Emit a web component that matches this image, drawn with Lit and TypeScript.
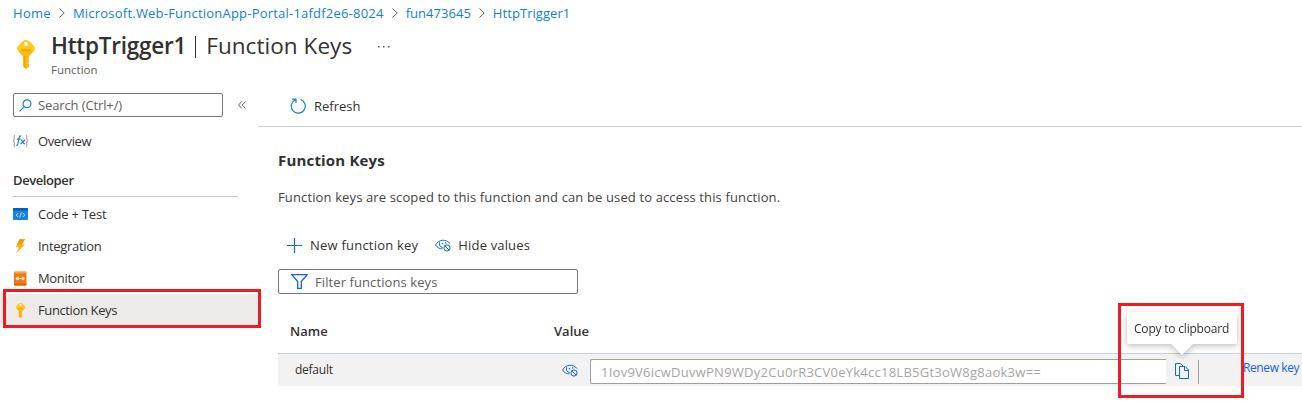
import { LitElement, html, css, svg } from "lit";
import { customElement } from "lit/decorators.js";

const key = svg`<path d="M9 0C7.400 0 6.200.8 4.900 2.100L.9 6.300c-1.200 1.300-1.200 3 0 4.300L6 16v10.500L9 29l3-2.500V24l-1-1 1-1v-2l-1-1 1-1v-2l5.100-5.400c1.200-1.300 1.200-3 0-4.300l-4-4.200C11.800.8 10.600 0 9 0Z" fill="#ffca1a"/><path d="M1 10.700h16L12 16v2l-1 1 1 1v2l-1 1 1 1v2.500L9 29l-3-2.500V16Z" fill="#fdb813"/><path d="M7 16h1.300v11.500L7 26.500Z" fill="#f5a00a"/><circle cx="9" cy="4" r="1.900" fill="#fff"/><rect x="4.300" y="9.200" width="9.400" height="2" rx=".8" fill="#f0a500"/>`;
const eye = html`<svg class="eye" width="16" height="13" viewBox="0 0 16 13" fill="none" stroke="currentColor"><path d="M.6 6C3.500 0 11.500-.2 15 4.600M.6 6C2.200 8.600 4.500 9.800 7.500 9.900"/><path d="M4.700 3.200C3.800 6 5 8.200 7.700 8.500M10.300 3.200c.5.700.6 1 .6 1.700"/><circle cx="7.500" cy="4.800" r=".8" fill="currentColor" stroke="none"/><circle cx="12" cy="9" r="3.100"/><path d="m9.900 6.900 4.200 4.200"/></svg>`;
const chevron = html`<svg class="chev" width="6" height="10" viewBox="0 0 6 10" fill="none" stroke="#605e5c"><path d="m.5.500 4.700 4.500L.5 9.500"/></svg>`;

@customElement("app-root")
export class AppRoot extends LitElement {
  static styles = css`
    :host { display: block; position: relative; width: 1302px; height: 413px; overflow: hidden; background: #fff; color: #323130; font: 13px/20px "Open Sans", sans-serif; white-space: nowrap; }
    * { box-sizing: border-box; }
    svg { display: block; flex: none; }
    .crumbs { display: flex; align-items: center; height: 25px; padding-left: 13px; color: #0f7fd8; }
    .c1 { letter-spacing: .3px; }
    .c2 { letter-spacing: .215px; }
    .c3 { letter-spacing: .03px; }
    .c4 { letter-spacing: .06px; }
    .chev { margin: 1px 8px 0 8px; }
    header { display: flex; height: 57px; padding-left: 17px; }
    .bigkey { margin: 15px 16px 0 0; }
    .title { display: flex; height: 40px; font-size: 22.500px; line-height: 42px; }
    .t1 { font-weight: 600; letter-spacing: -.22px; }
    .t2 { letter-spacing: .05px; }
    .bar { width: 1px; height: 22px; background: #323130; margin: 11px 10px 0 9px; }
    .more { margin: 20px 0 0 26px; }
    .sub { font-size: 11.500px; line-height: 9px; color: #605e5c; }
    .body { display: flex; }
    nav { width: 258px; padding-top: 11px; }
    .searchrow { display: flex; align-items: center; }
    .search { display: flex; align-items: center; width: 210px; height: 24px; margin-left: 13px; border: 1px solid #7a7876; border-radius: 2px; padding-left: 5px; color: #605e5c; }
    .search svg { margin-right: 6px; }
    .s1 { letter-spacing: -.12px; }
    .collapse { margin-left: 15px; }
    .item { display: flex; align-items: center; height: 32px; padding-left: 13px; }
    .item svg { margin-right: 10px; }
    .n1 { letter-spacing: -.4px; }
    .n3 { letter-spacing: -.22px; }
    .n4 { letter-spacing: -.32px; }
    .n5 { letter-spacing: -.33px; }
    .n6 { letter-spacing: -.38px; }
    .overview { margin-top: 8px; }
    .group { height: 40px; margin: 0 20px 0 13px; border-bottom: 1px solid #c8c6c4; font-weight: 600; line-height: 46px; letter-spacing: -.4px; }
    .list { padding-top: 1px; }
    .on { background: #edebe9; }
    main { flex: 1; min-width: 0; }
    .toolbar { display: flex; align-items: center; height: 45px; padding: 4px 0 0 32px; border-bottom: 1px solid #d2d0ce; }
    .toolbar svg { margin-right: 8px; }
    .content { padding-left: 20px; }
    h2 { margin: 24px 0 0; font-size: 15px; line-height: 18px; font-weight: 700; letter-spacing: .18px; }
    .p { margin-top: 18px; color: #44423f; letter-spacing: .13px; }
    .cmds { display: flex; align-items: center; height: 20px; margin: 28px 0 14px; padding-left: 9px; }
    .cmds > svg { color: #0f6cbd; }
    .plus { margin-right: 8px; }
    .cmds .eye { margin: 0 7px 0 17px; }
    .k1 { letter-spacing: .22px; }
    .k2 { letter-spacing: .16px; }
    .filter { display: flex; align-items: center; width: 300px; height: 25px; border: 1px solid #7a7876; border-radius: 2px; padding-left: 12px; color: #605e5c; letter-spacing: .09px; }
    .filter svg { margin-right: 7px; }
    .thead { display: grid; grid-template-columns: 264px 1fr; height: 60px; padding: 17px 0 0 12px; border-bottom: 1px solid #c5d0dc; font-weight: 600; line-height: 41px; }
    .row { display: flex; align-items: center; height: 32px; background: #f2f2f2; }
    .row > * { flex: none; }
    .name { width: 267px; padding-left: 17px; letter-spacing: -.25px; }
    .row .eye { color: #1562e0; margin: 1px 12px 0 17px; }
    .val { width: 576px; height: 25px; margin-top: 2px; padding-left: 10px; background: #fff; border: 1px solid #a19f9d; border-right: 0; border-radius: 2px 0 0 2px; color: #a6a4a2; line-height: 24px; letter-spacing: .25px; }
    .copy { margin: 1px 8px 0 9px; }
    .sep { width: 1px; height: 24px; margin: 3px 44px 0 0; background: #a19f9d; }
    .renew { color: #1562e0; margin-top: -4px; letter-spacing: -.4px; }
    .mark { position: absolute; border: 3px solid #ed1c24; }
    .m1 { left: 3px; top: 289px; width: 258px; height: 39px; }
    .m2 { left: 1118px; top: 303px; width: 126px; height: 95px; }
    .tip { position: absolute; left: 1127px; top: 312px; width: 110px; height: 32px; padding-left: 7px; background: #fff; border-radius: 2px; filter: drop-shadow(0 2px 3px rgba(0,0,0,.25)); line-height: 33px; font-size: 12px; letter-spacing: -.2px; }
    .tip::after { content: ""; position: absolute; left: 44px; top: 32px; border: 11px solid transparent; border-top-color: #fff; border-bottom: 0; }
    .name, .renew { font-size: 12px; }
  `;
  render() {
    const t = (s: string, c = "") => html`<span class=${c}>${s}</span>`;
    return html`
      <div class="crumbs">${t("Home", "c1")}${chevron}${t("Microsoft.Web-FunctionApp-Portal-1afdf2e6-8024", "c2")}${chevron}${t("fun473645", "c3")}${chevron}${t("HttpTrigger1", "c4")}</div>
      <header>
        <svg class="bigkey" width="18" height="29" viewBox="0 0 18 29">${key}</svg>
        <div><div class="title">${t("HttpTrigger1", "t1")}<i class="bar"></i>${t("Function Keys", "t2")}
          <svg class="more" width="12" height="3" viewBox="0 0 12 3" fill="#605e5c"><path d="M0 1h1.500v1.500H0zM5 1h1.500v1.500H5zM10 1h1.500v1.500H10z"/></svg></div>
          <div class="sub">Function</div></div>
      </header>
      <div class="body">
        <nav>
          <div class="searchrow"><div class="search"><svg width="13" height="13" viewBox="0 0 13 13" fill="none" stroke="#0f7fd8" stroke-width="1.200"><circle cx="8" cy="4.800" r="3.900"/><path d="M5.200 7.700.6 12.300"/></svg>${t("Search (Ctrl+/)", "s1")}</div>
            <svg class="collapse" width="8" height="8" viewBox="0 0 8 8" fill="none" stroke="#605e5c"><path d="M3.800.5.500 4l3.300 3.500M7.500.5 4.200 4l3.300 3.500"/></svg></div>
          <div class="item overview"><svg width="15" height="14" viewBox="0 0 15 14"><g fill="none" stroke="#a5a5a5" stroke-width="1.200"><path d="M2 1Q1.200 1 1.200 3v2.500L.4 6.800l.8 1.200v3q0 2 .8 2M13 1q.8 0 .8 2v2.500l.8 1.300-.8 1.200v3q0 2-.8 2"/></g><g fill="none" stroke="#1a7fd6" stroke-width="1.200"><path d="M8.300 2.100C6.600 1.300 6.200 3 5.900 4.500L4.800 10c-.2 1.100-.8 1.500-1.700 1M4 5.200h3.600M7.800 6c2-.8 1.600 4.600 4.400 3.700M12.200 5.800 7.600 10"/></g></svg>${t("Overview", "n1")}</div>
          <div class="group">Developer</div>
          <div class="list">
            <div class="item"><svg width="15" height="12" viewBox="0 0 15 12"><rect width="15" height="12" rx=".8" fill="#1683dc"/><path d="M0 0h15v2.500H0z" fill="#0a5fb4"/><path d="M5.200 5 3.200 7l2 2M9.800 5l2 2-2 2M8.300 4.500l-1.600 5" fill="none" stroke="#cfe8ff" stroke-width=".9"/></svg>${t("Code + Test", "n3")}</div>
            <div class="item"><svg width="15" height="15" viewBox="0 0 15 15"><path d="M6.500.3H12L8.800 5.500H12L3 14.500 6 8.300H2.800Z" fill="#fcb514"/><path d="M6.500.3H12L8.800 5.500 4.200 6z" fill="#f79a0e"/></svg>${t("Integration", "n4")}</div>
            <div class="item"><svg width="15" height="15" viewBox="0 0 15 15"><rect x="1" y=".5" width="12.500" height="14" rx="1" fill="#f07a13"/><path d="M1 12.500h12.500v1a1 1 0 0 1-1 1H2a1 1 0 0 1-1-1z" fill="#dc6407"/><path d="M2 1.800h11" stroke="#ffc38a" stroke-width=".8"/><path d="M6 7.500h2.500" stroke="#fff"/><circle cx="4.500" cy="7.500" r="1.300" fill="#f9c294" stroke="#fff" stroke-width=".8"/><circle cx="10" cy="7.500" r="1.300" fill="#f9c294" stroke="#fff" stroke-width=".8"/></svg>${t("Monitor", "n5")}</div>
            <div class="item on"><svg width="15" height="15" viewBox="-5.500 0 29 29">${key}</svg>${t("Function Keys", "n6")}</div>
          </div>
        </nav>
        <main>
          <div class="toolbar"><svg width="16" height="16" viewBox="0 0 16 16" fill="none" stroke="#0f7fd8" stroke-width="1.200"><path d="M10.500 1.500A7 7 0 1 1 5.500 1.700M2.300 1.200H6V5"/></svg>${t("Refresh")}</div>
          <div class="content">
            <h2>Function Keys</h2>
            <div class="p">Function keys are scoped to this function and can be used to access this function.</div>
            <div class="cmds"><svg class="plus" width="15" height="15" viewBox="0 0 15 15" stroke="currentColor" stroke-width="1.200"><path d="M7.500 0v15M0 7.500h15"/></svg>${t("New function key", "k1")}${eye}${t("Hide values", "k2")}</div>
            <div class="filter"><svg width="17" height="15" viewBox="0 0 17 15" fill="none" stroke="#1562e0" stroke-width="1.300"><path d="M.8.700h15.400L10.300 7.500v6.800H6.700V7.500Z"/></svg>${t("Filter functions keys")}</div>
            <div class="thead">${t("Name")}${t("Value")}</div>
            <div class="row"><div class="name">default</div>${eye}<div class="val">1Iov9V6icwDuvwPN9WDy2Cu0rR3CV0eYk4cc18LB5Gt3oW8g8aok3w==</div>
              <svg class="copy" width="15" height="16" viewBox="0 0 15 16" fill="none" stroke="#0f6cbd"><path d="M4.500 12.500h-4V.5h5l2.500 2.500M4.500 3.500h5.700l3.300 3.500v8.500h-9ZM9.500 3.500v4h4"/></svg><i class="sep"></i>
              <div class="renew">Renew key</div></div>
          </div>
        </main>
      </div>
      <div class="tip">Copy to clipboard</div>
      <div class="mark m1"></div><div class="mark m2"></div>`;
  }
}
